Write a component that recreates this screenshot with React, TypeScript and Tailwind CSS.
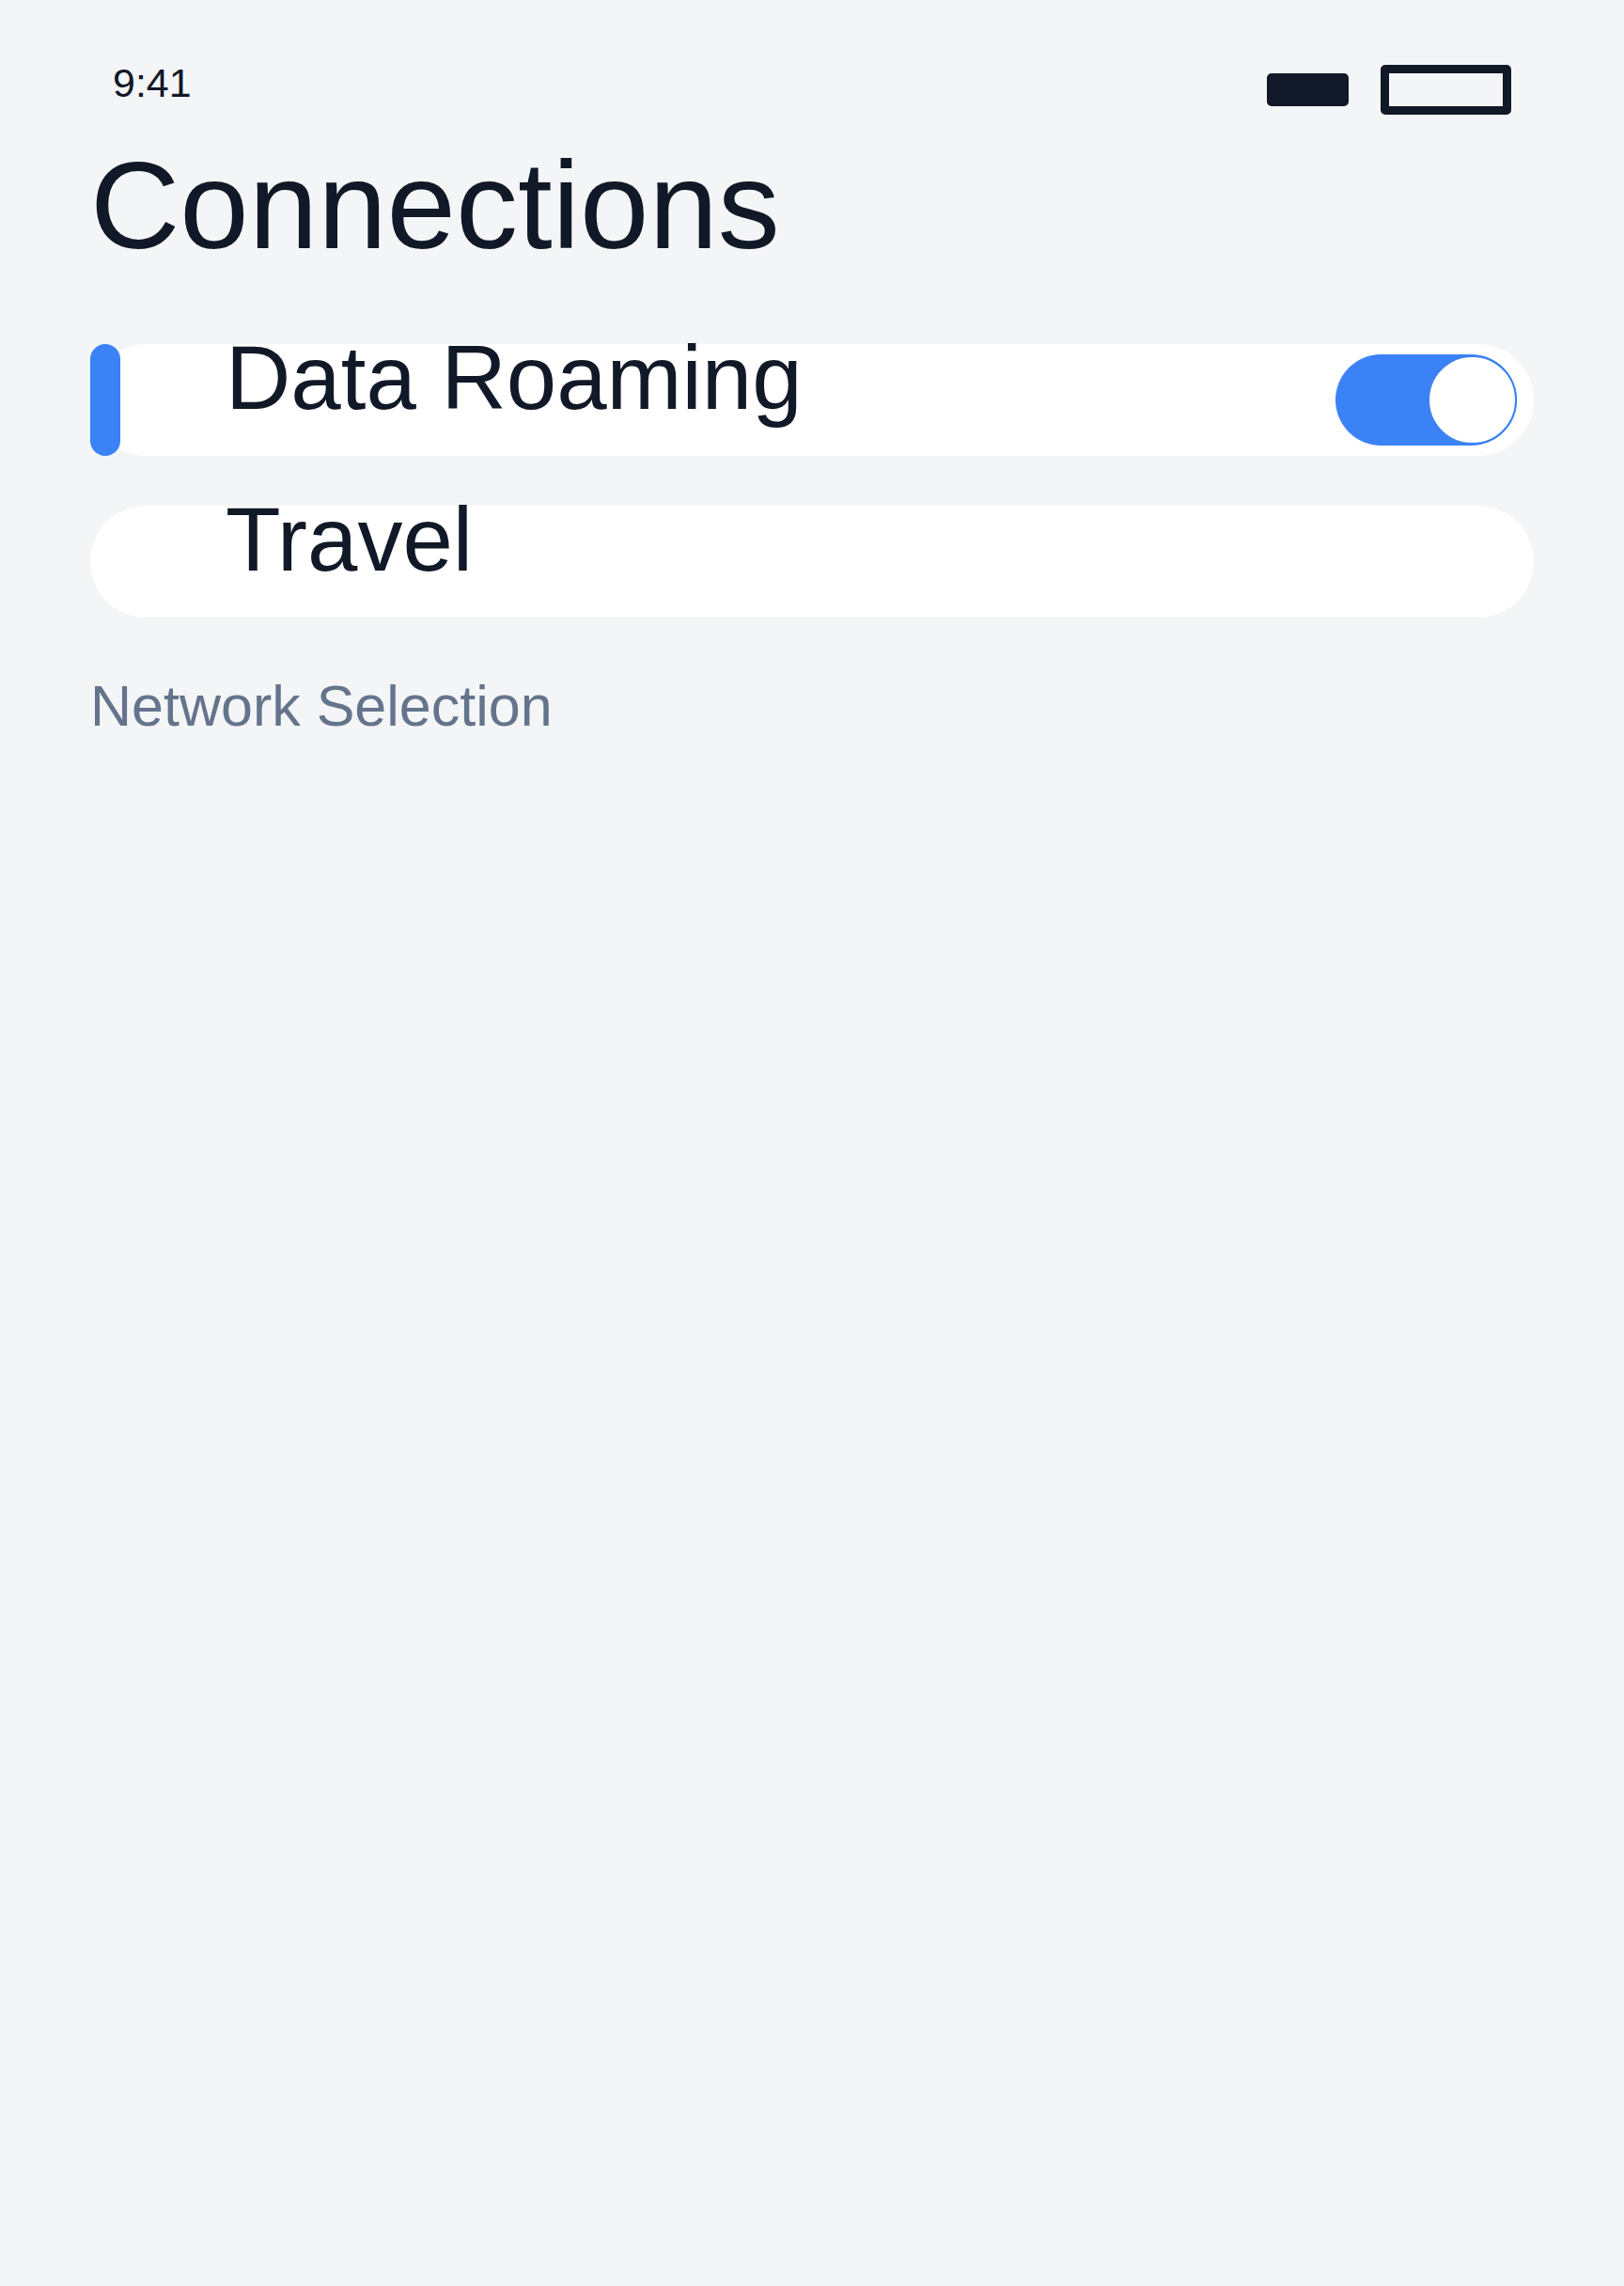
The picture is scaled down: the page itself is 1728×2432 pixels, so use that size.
import React from 'react';

const StatusBar = () => {
  return (
    <div className="flex justify-between items-start px-[120px] pt-[67px]">
      <span className="text-[43px] leading-none text-[#111827]">9:41</span>
      <div className="flex items-center gap-[34px] mt-[2px]">
        <div className="w-[87px] h-[35px] rounded-[5px] bg-[#111827]" />
        <div className="w-[139px] h-[53px] rounded-[5px] border-[9px] border-[#111827]" />
      </div>
    </div>
  );
};

const Toggle = ({ on }: { on: boolean }) => {
  return (
    <div
      className={`w-[193px] h-[97px] rounded-full flex items-center ${
        on ? 'bg-[#3b82f6] justify-end' : 'bg-gray-300 justify-start'
      }`}
    >
      <div className="w-[95px] h-[95px] rounded-full bg-white border-2 border-[#3b82f6]" />
    </div>
  );
};

const SettingRow = ({
  label,
  active,
  toggle,
}: {
  label: string;
  active?: boolean;
  toggle?: boolean;
}) => {
  return (
    <div className="relative h-[119px] rounded-full bg-white flex items-start justify-between pl-[144px] pr-[18px]">
      {active && (
        <div className="absolute left-0 top-0 h-full w-[32px] rounded-full bg-[#3b82f6]" />
      )}
      <span className="-mt-[12px] text-[96px] leading-none text-[#111827]">{label}</span>
      {toggle !== undefined && (
        <div className="self-center">
          <Toggle on={toggle} />
        </div>
      )}
    </div>
  );
};

const App = () => {
  return (
    <div
      className="min-h-[2432px] w-full bg-[#f4f5f7]"
      style={{ fontFamily: '"Liberation Sans", Arial, sans-serif' }}
    >
      <StatusBar />
      <div className="px-24">
        <h1 className="mt-[31px] text-[132px] leading-none font-normal text-[#111827]">
          Connections
        </h1>
        <div className="mt-[81px] flex flex-col gap-[53px]">
          <SettingRow label="Data Roaming" active toggle={true} />
          <SettingRow label="Travel" />
        </div>
        <div className="mt-[64px] text-[61px] leading-none text-[#64748b]">
          Network Selection
        </div>
      </div>
    </div>
  );
};

export default App;
